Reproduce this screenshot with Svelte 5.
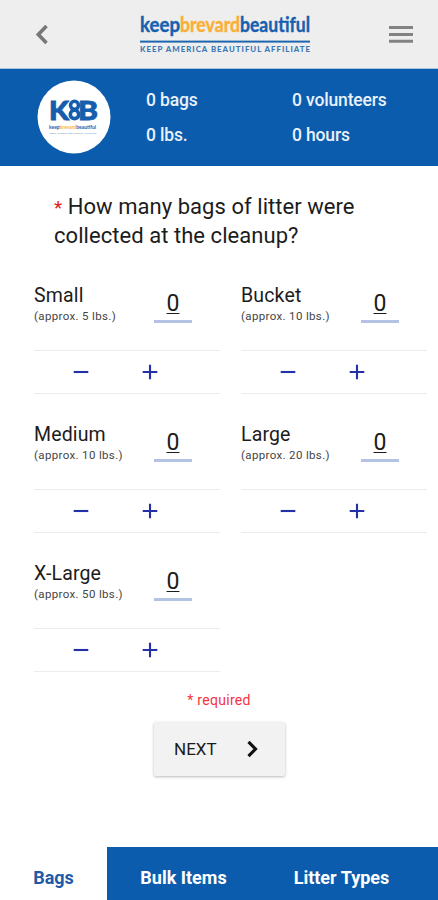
<script>
    let sizes = $state([
        { name: 'Small',   lbs: 5,  count: 0 },
        { name: 'Bucket',  lbs: 10, count: 0 },
        { name: 'Medium',  lbs: 10, count: 0 },
        { name: 'Large',   lbs: 20, count: 0 },
        { name: 'X-Large', lbs: 50, count: 0 }
    ]);

    const tabs = ['Bags', 'Bulk Items', 'Litter Types'];
    let active = $state('Bags');

    const bags = $derived(sizes.reduce((sum, s) => sum + s.count, 0));
    const lbs = $derived(sizes.reduce((sum, s) => sum + s.count * s.lbs, 0));

    const step = (size, by) => {
        size.count = Math.max(0, size.count + by);
    };
</script>

<div class="app">
    <header>
        <button class="back" aria-label="Back">
            <svg width="14" height="22" viewBox="0 0 14 22">
                <path d="M11.5 2 3.3 10.5l8.2 8.5" fill="none" stroke="#777" stroke-width="3.6" />
            </svg>
        </button>
        <svg class="logo" width="172" height="40" viewBox="0 0 172 40">
            <g class="wordmark">
                <text x="0" y="17.5" textLength="40" lengthAdjust="spacingAndGlyphs" fill="#1760ae" stroke="#1760ae">keep</text>
                <text x="40" y="17.5" textLength="60" lengthAdjust="spacingAndGlyphs" fill="#fcae35" stroke="#fcae35">brevard</text>
                <text x="100" y="17.5" textLength="70" lengthAdjust="spacingAndGlyphs" fill="#1760ae" stroke="#1760ae">beautiful</text>
            </g>
            <rect x="0" y="26.6" width="170" height="2" fill="#1f66b0" />
            <text class="tagline" x="0" y="38" textLength="170">KEEP AMERICA BEAUTIFUL AFFILIATE</text>
        </svg>
        <button class="menu" aria-label="Menu">
            <svg width="26" height="20" viewBox="0 0 26 20">
                <path d="M1 3.5h24M1 10.4h24M1 17.3h24" stroke="#828282" stroke-width="3" />
            </svg>
        </button>
    </header>

    <section class="summary">
        <svg class="badge" width="74" height="74" viewBox="0 0 74 74">
            <circle cx="37" cy="37" r="36.5" fill="#fff" />
            <g class="initials">
                <text x="12" y="39.5" textLength="20" lengthAdjust="spacingAndGlyphs">K</text>
                <text x="41" y="39.5" textLength="20" lengthAdjust="spacingAndGlyphs">B</text>
            </g>
            <!-- double ring between the two letters -->
            <circle cx="37.5" cy="25.3" r="4" fill="#fff" stroke="#165dac" stroke-width="3.6" />
            <circle cx="37.5" cy="34.4" r="4.2" fill="#fff" stroke="#165dac" stroke-width="3.6" />
            <text class="badge-name" x="12" y="48.8" textLength="47" lengthAdjust="spacingAndGlyphs">keep<tspan fill="#fcae35">brevard</tspan>beautiful</text>
            <text class="badge-tag" x="12.5" y="53.5" textLength="47" lengthAdjust="spacingAndGlyphs">KEEP AMERICA BEAUTIFUL AFFILIATE</text>
        </svg>
        <div class="totals">
            <span>{bags} bags</span>
            <span>0 volunteers</span>
            <span>{lbs} lbs.</span>
            <span>0 hours</span>
        </div>
    </section>

    <main>
        <h1><span class="star">*</span> How many bags of litter were<br />collected at the cleanup?</h1>

        <div class="sizes">
            {#each sizes as size}
                <div class="size">
                    <div class="info">
                        <div class="label">
                            <div class="name">{size.name}</div>
                            <div class="approx">(approx. {size.lbs} lbs.)</div>
                        </div>
                        <div class="count"><span>{size.count}</span></div>
                    </div>
                    <div class="stepper">
                        <button aria-label="Remove one" onclick={() => step(size, -1)}>
                            <svg width="16" height="16" viewBox="0 0 16 16">
                                <path d="M.7 8h14.6" stroke="#2330a8" stroke-width="2.1" />
                            </svg>
                        </button>
                        <button aria-label="Add one" onclick={() => step(size, 1)}>
                            <svg width="16" height="16" viewBox="0 0 16 16">
                                <path d="M.7 8h14.6M8 .7v14.6" stroke="#2330a8" stroke-width="2.1" />
                            </svg>
                        </button>
                    </div>
                </div>
            {/each}
        </div>

        <p class="required">* required</p>
        <button class="next">
            NEXT
            <svg width="12" height="18" viewBox="0 0 12 18">
                <path d="M1.5 1.8 8.5 9l-7 7.2" fill="none" stroke="#111" stroke-width="3.2" />
            </svg>
        </button>
    </main>

    <nav>
        {#each tabs as tab}
            <button class:active={tab === active} onclick={() => (active = tab)}>{tab}</button>
        {/each}
    </nav>
</div>

<style>
    :global(body) {
        background: #fff;
    }

    .app {
        display: flex;
        flex-direction: column;
        width: 438px;
        height: 900px;
        overflow: hidden;
        font-family: Roboto, sans-serif;
        color: #1c1c1c;
    }

    button {
        padding: 0;
        border: 0;
        background: none;
        font: inherit;
        color: inherit;
        cursor: pointer;
    }

    svg {
        display: block;
    }

    header {
        display: flex;
        align-items: flex-start;
        box-sizing: border-box;
        height: 69px;
        padding: 0 24px 0 35px;
        background: #eee;
        border-bottom: 1px solid #a9c3de;
    }

    .back {
        margin-top: 24px;
    }

    .logo {
        margin: 14px 0 0 91px;
        overflow: visible;
    }

    .wordmark {
        font: 700 20.5px Lato, sans-serif;
        stroke-width: 0.4px;
    }

    .tagline {
        font: 900 7.8px Lato, sans-serif;
        fill: #3c77b6;
    }

    .menu {
        margin: 24px 0 0 auto;
    }

    .summary {
        display: flex;
        flex: none;
        box-sizing: border-box;
        height: 97px;
        padding: 11px 0 0 37px;
        background: #0c5cad;
    }

    .initials {
        font: 900 26px Lato, sans-serif;
        fill: #165dac;
        stroke: #165dac;
        stroke-width: 0.8px;
    }

    .badge-name {
        font: 700 5px Lato, sans-serif;
        fill: #165dac;
    }

    .badge-tag {
        font: 700 2.6px Lato, sans-serif;
        fill: #7f9fc4;
    }

    .totals {
        display: grid;
        grid-template-columns: 146px 146px;
        grid-auto-rows: 35px;
        margin-left: 35px;
        padding-top: 3px;
        font-size: 17.5px;
        font-weight: 500;
        line-height: 35px;
        letter-spacing: -0.15px;
        color: #e9f1fb;
    }

    main {
        display: flex;
        flex: 1;
        flex-direction: column;
    }

    h1 {
        margin: 26px 0 0 54px;
        font-size: 22px;
        font-weight: 400;
        line-height: 29px;
        letter-spacing: 0.05px;
    }

    .star {
        font-size: 19px;
        line-height: 1;
        color: #e02020;
    }

    .sizes {
        display: grid;
        grid-template-columns: 186px 186px;
        gap: 25px 21px;
        margin: 30px 0 0 34px;
    }

    .info {
        display: flex;
        height: 70px;
    }

    .label {
        width: 120px;
        padding-top: 5px;
    }

    .name {
        font-size: 19.5px;
        line-height: 22px;
        letter-spacing: 0.15px;
    }

    .approx {
        font-size: 11.5px;
        line-height: 18px;
        letter-spacing: 0.35px;
        color: #444;
    }

    .count {
        box-sizing: border-box;
        width: 38px;
        height: 43px;
        border-bottom: 3px solid #b4c3e4;
        font-size: 23px;
        line-height: 48px;
        text-align: center;
    }

    .count span {
        text-decoration: underline;
        text-decoration-thickness: 1px;
        text-underline-offset: 2px;
    }

    .stepper {
        display: flex;
        gap: 53px;
        height: 42px;
        padding-left: 39px;
        border-top: 1px solid #ececec;
        border-bottom: 1px solid #ececec;
    }

    .required {
        margin: 19px 0 0;
        font-size: 14px;
        line-height: 18px;
        letter-spacing: 0.3px;
        text-align: center;
        color: #f5333f;
    }

    .next {
        display: flex;
        align-items: center;
        gap: 30px;
        width: 131px;
        height: 54px;
        margin: 13px 0 0 154px;
        padding-left: 20px;
        border-radius: 2px;
        background: #f2f2f2;
        box-shadow: 0 1px 3px rgba(0, 0, 0, 0.28);
        font-size: 17px;
    }

    nav {
        display: flex;
        height: 53px;
        background: #0c5cad;
    }

    nav button {
        padding-top: 7px;
        font-size: 18px;
        font-weight: 700;
        color: #fff;
    }

    nav button:nth-child(1) {
        width: 107px;
    }

    nav button:nth-child(2) {
        width: 153px;
    }

    nav button:nth-child(3) {
        width: 163px;
    }

    nav .active {
        background: #fff;
        color: #1f59a8;
    }
</style>
